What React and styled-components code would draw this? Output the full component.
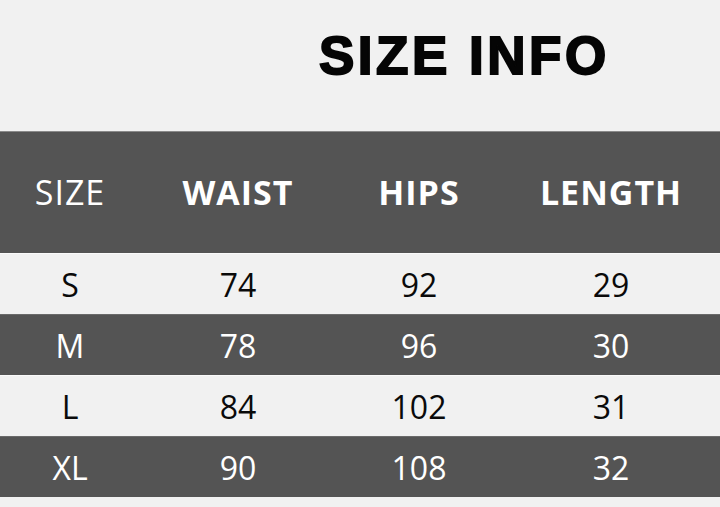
import styled, { createGlobalStyle } from 'styled-components'

const GlobalStyle = createGlobalStyle`
  html, body {
    margin: 0;
    padding: 0;
    background: #f1f1f1;
  }
`

const columns = ['SIZE', 'WAIST', 'HIPS', 'LENGTH']

const rows = [
  ['S', '74', '92', '29'],
  ['M', '78', '96', '30'],
  ['L', '84', '102', '31'],
  ['XL', '90', '108', '32'],
]

export default function App() {
  return (
    <Page>
      <GlobalStyle />
      <TitleBar>
        <Title>SIZE INFO</Title>
      </TitleBar>

      <HeaderRow>
        {columns.map((c, i) => (
          <HeadCell key={c} $light={i === 0}>{c}</HeadCell>
        ))}
      </HeaderRow>

      {rows.map((r, i) => (
        <Row key={r[0]} $dark={i % 2 === 1}>
          {r.map((v, j) => (
            <Cell key={j}>{v}</Cell>
          ))}
        </Row>
      ))}
    </Page>
  )
}

const Page = styled.div`
  width: 720px;
  height: 507px;
  overflow: hidden;
  background: #f1f1f1;
  font-family: 'Open Sans', 'Noto Sans', sans-serif;
`

const TitleBar = styled.div`
  height: 131px;
  display: flex;
  align-items: center;
  box-sizing: border-box;
  padding-left: 319px;
  padding-bottom: 20px;
`

const Title = styled.h1`
  margin: 0;
  font-family: 'Liberation Sans', Arial, sans-serif;
  font-weight: 700;
  font-size: 53px;
  letter-spacing: 3.5px;
  color: #050505;
  -webkit-text-stroke: 2px #050505;
  line-height: 1;
`

const grid = `
  display: grid;
  grid-template-columns: 140px 196px 166px 1fr;
  align-items: center;
  justify-items: center;
`

const HeaderRow = styled.div`
  ${grid}
  height: 122px;
  box-sizing: border-box;
  background: #545454;
  border-top: 1px solid #8a8a8a;
  padding-bottom: 2px;
`

const HeadCell = styled.div`
  color: #ffffff;
  font-size: 34px;
  font-weight: ${p => (p.$light ? 400 : 700)};
  letter-spacing: 1px;
`

const Row = styled.div`
  ${grid}
  height: 61px;
  box-sizing: border-box;
  background: ${p => (p.$dark ? '#545454' : '#f1f1f1')};
  color: ${p => (p.$dark ? '#ffffff' : '#0a0a0a')};
  border-top: 1px solid ${p => (p.$dark ? '#6a6a6a' : '#fafafa')};
`

const Cell = styled.div`
  font-size: 32px;
  letter-spacing: 0;
`
